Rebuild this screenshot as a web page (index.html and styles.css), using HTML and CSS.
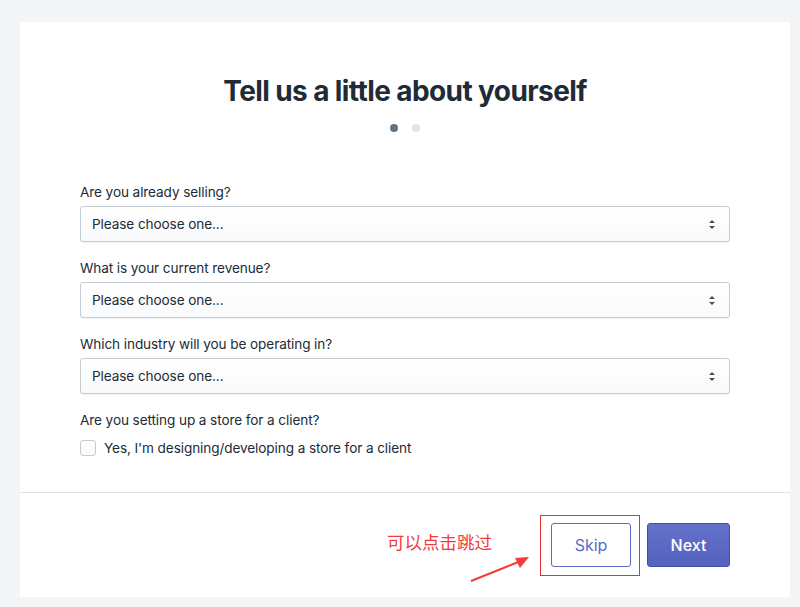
FILE: index.html
```html
<!DOCTYPE html>
<html lang="en">
<head>
<meta charset="utf-8">
<title>Tell us a little about yourself</title>
<link rel="stylesheet" href="styles.css">
</head>
<body>
<div class="card">
  <div class="header">
    <h1 class="title">Tell us a little about yourself</h1>
    <div class="dots"><span class="dot active"></span><span class="dot"></span></div>
  </div>
  <form class="form">
    <div class="field">
      <label class="label">Are you already selling?</label>
      <div class="select"><span>Please choose one...</span><span class="arrows"><i class="up"></i><i class="down"></i></span></div>
    </div>
    <div class="field">
      <label class="label">What is your current revenue?</label>
      <div class="select"><span>Please choose one...</span><span class="arrows"><i class="up"></i><i class="down"></i></span></div>
    </div>
    <div class="field">
      <label class="label">Which industry will you be operating in?</label>
      <div class="select"><span>Please choose one...</span><span class="arrows"><i class="up"></i><i class="down"></i></span></div>
    </div>
    <div class="field">
      <label class="label">Are you setting up a store for a client?</label>
      <div class="check-row"><span class="checkbox"></span><span>Yes, I'm designing/developing a store for a client</span></div>
    </div>
  </form>
  <div class="footer">
    <button class="btn btn-skip" type="button">Skip</button>
    <button class="btn btn-next" type="button">Next</button>
    <span class="note">可以点击跳过</span>
    <span class="highlight"></span>
    <svg class="pointer" width="64" height="30" viewBox="0 0 64 30"><line x1="2" y1="28" x2="52" y2="8" stroke="#f23b3b" stroke-width="2"/><polygon points="60,4 46,5 51,15" fill="#f23b3b"/></svg>
  </div>
</div>
</body>
</html>
```
FILE: styles.css
```css
* { box-sizing: border-box; }
html, body { margin: 0; padding: 0; }
body {
  background: #f4f5f7;
  font-family: "Inter", "Liberation Sans", sans-serif;
  color: #212b36;
  width: 800px;
  height: 607px;
  overflow: hidden;
}
.card {
  margin: 22px 10px 0 20px;
  width: 770px;
  height: 575px;
  background: #fff;
  display: flex;
  flex-direction: column;
}
.header {
  padding-top: 51px;
  display: flex;
  flex-direction: column;
  align-items: center;
}
.title {
  margin: 0;
  font-size: 28px;
  line-height: 36px;
  font-weight: 700;
  letter-spacing: -0.6px;
  color: #212b36;
}
.dots {
  margin-top: 15px;
  display: flex;
  gap: 14px;
}
.dot {
  width: 8px;
  height: 8px;
  border-radius: 50%;
  background: #dfe3e8;
}
.dot.active { background: #637381; }
.form {
  padding: 50px 60px 34px;
  display: flex;
  flex-direction: column;
  gap: 16px;
}
.field { display: flex; flex-direction: column; }
.label {
  font-size: 13.6px;
  letter-spacing: -0.1px;
  line-height: 20px;
  margin-bottom: 4px;
  color: #212b36;
}
.select {
  height: 36px;
  border: 1px solid #c4cdd5;
  border-radius: 3px;
  background: linear-gradient(#fff, #f9fafb);
  box-shadow: 0 1px 0 rgba(22, 29, 37, 0.05);
  display: flex;
  align-items: center;
  justify-content: space-between;
  padding: 0 14px 0 11px;
  font-size: 13.6px;
  letter-spacing: -0.1px;
  color: #212b36;
}
.arrows {
  display: flex;
  flex-direction: column;
  gap: 3px;
}
.arrows i {
  display: block;
  width: 0;
  height: 0;
  border-left: 3px solid transparent;
  border-right: 3px solid transparent;
}
.arrows .up { border-bottom: 3px solid #454f5b; }
.arrows .down { border-top: 3px solid #454f5b; }
.check-row {
  display: flex;
  align-items: center;
  gap: 8px;
  font-size: 13.6px;
  letter-spacing: -0.1px;
  line-height: 20px;
  margin-top: 4px;
}
.checkbox {
  width: 16px;
  height: 16px;
  border: 1px solid #c4cdd5;
  border-radius: 3px;
  background: linear-gradient(#fff, #f9fafb);
}
.footer {
  position: relative;
  border-top: 1px solid #dfe3e8;
  padding: 30px 60px 0;
  display: flex;
  justify-content: flex-end;
  gap: 16px;
}
.btn {
  height: 44px;
  border-radius: 3px;
  font-family: "Inter", "Liberation Sans", sans-serif;
  font-size: 16px;
  padding: 0 20px;
}
.btn-skip {
  width: 80px;
  background: #fff;
  border: 1px solid #5c6ac4;
  color: #5c6ac4;
}
.btn-next {
  width: 83px;
  background: linear-gradient(#6371c7, #5563c1);
  border: 1px solid #3f4eae;
  color: #fff;
  font-weight: 500;
}
.note {
  position: absolute;
  left: 367px;
  top: 37px;
  font-family: "Noto Sans CJK SC", sans-serif;
  font-size: 17.5px;
  line-height: 24px;
  color: #f23b3b;
}
.highlight {
  position: absolute;
  left: 520px;
  top: 22px;
  width: 100px;
  height: 61px;
  border: 1px solid #e8302f;
}
.pointer {
  position: absolute;
  left: 449px;
  top: 60px;
}
```
